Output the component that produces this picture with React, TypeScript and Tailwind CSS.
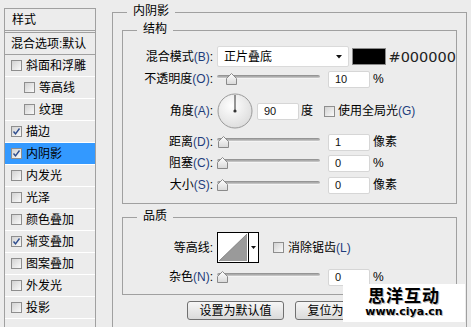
import React from 'react';

const FONT = '"Liberation Sans", "Noto Sans CJK SC", sans-serif';

interface StyleItem {
  label: string;
  checked?: boolean;
  sub?: boolean;
  active?: boolean;
}

const styleItems: StyleItem[] = [
  { label: '斜面和浮雕' },
  { label: '等高线', sub: true },
  { label: '纹理', sub: true },
  { label: '描边', checked: true },
  { label: '内阴影', checked: true, active: true },
  { label: '内发光' },
  { label: '光泽' },
  { label: '颜色叠加' },
  { label: '渐变叠加', checked: true },
  { label: '图案叠加' },
  { label: '外发光' },
  { label: '投影' },
];

const Check: React.FC<{ checked?: boolean }> = ({ checked }) => (
  <span className="relative flex w-[11px] h-[11px] shrink-0 border border-[#8e8e8e] bg-gradient-to-br from-[#d2d2d2] to-[#fafafa]">
    {checked && (
      <svg viewBox="0 0 9 9" className="w-[9px] h-[9px]">
        <path d="M1.5 4.5 L3.5 6.8 L7.5 1.5" fill="none" stroke="#2d4c8e" strokeWidth="1.4" />
      </svg>
    )}
  </span>
);

// label with the hotkey letter in a blue tint, like "混合模式(B):"
const Label: React.FC<{ text: string; hot?: string }> = ({ text, hot }) => (
  <div className="w-[90px] shrink-0 text-right text-[12px] leading-[14px] text-black whitespace-nowrap">
    {text}
    {hot && <span className="text-[#1e3c7c]">({hot})</span>}:
  </div>
);

const Thumb = () => (
  <svg viewBox="0 0 11 12" className="w-[11px] h-[12px]">
    <defs>
      <linearGradient id="tg" x1="0" y1="0" x2="0" y2="1">
        <stop offset="0" stopColor="#ffffff" />
        <stop offset="1" stopColor="#d8d8d8" />
      </linearGradient>
    </defs>
    <path d="M5.5 0.5 L10.5 5.5 L10.5 11.5 L0.5 11.5 L0.5 5.5 Z" fill="url(#tg)" stroke="#8a8a8a" />
  </svg>
);

const Slider: React.FC<{ value: number }> = ({ value }) => (
  <div className="relative w-[103px] h-[13px] shrink-0">
    <div className="absolute left-0 right-0 top-[2px] h-[4px] rounded-full bg-gradient-to-b from-[#8a8a8a] to-[#cfcfcf] border-b border-[#f4f4f4]" />
    <div className="absolute top-0" style={{ left: Math.round((value / 100) * 92) }}>
      <Thumb />
    </div>
  </div>
);

const NumInput: React.FC<{ value: string }> = ({ value }) => (
  <div className="w-[42px] h-[17px] shrink-0 bg-white border border-[#d6d6d6] rounded-[2px] pl-[6px] text-[11px] leading-[15px] text-[#111]">
    {value}
  </div>
);

const SliderRow: React.FC<{ text: string; hot?: string; value: number; unit: string; className?: string }> = ({ text, hot, value, unit, className }) => (
  <div className={`flex items-center h-[18px] ${className ?? ''}`}>
    <Label text={text} hot={hot} />
    <div className="ml-[4px]">
      <Slider value={value} />
    </div>
    <div className="ml-[8px]">
      <NumInput value={String(value)} />
    </div>
    <span className="ml-[3px] text-[12px] leading-[14px]">{unit}</span>
  </div>
);

const GroupTitle: React.FC<{ children: React.ReactNode }> = ({ children }) => (
  <span className="absolute left-[14px] top-[-9px] px-[6px] bg-[#ececec] text-[12px] leading-[14px] text-black">{children}</span>
);

const Dial = () => (
  <svg viewBox="0 0 36 36" className="w-[36px] h-[36px] shrink-0">
    <defs>
      <radialGradient id="dg" cx="0.4" cy="0.35" r="0.7">
        <stop offset="0" stopColor="#ffffff" />
        <stop offset="1" stopColor="#dcdcdc" />
      </radialGradient>
    </defs>
    <circle cx="18" cy="18" r="17" fill="url(#dg)" stroke="#9a9a9a" />
    <line x1="18" y1="18" x2="18" y2="2" stroke="#333" strokeWidth="1" />
    <circle cx="18" cy="18" r="1.6" fill="#333" />
  </svg>
);

export default function App() {
  return (
    <div className="relative w-[471px] h-[327px] overflow-hidden bg-[#ececec] flex pl-[4px] pt-[8px]" style={{ fontFamily: FONT }}>
      {/* styles list */}
      <div className="w-[92px] h-[330px] shrink-0 border border-[#a0a0a0] text-[12px] leading-[14px] text-black">
        <div className="h-[22px] border-b border-[#a0a0a0] pl-[7px] flex items-center">样式</div>
        <div className="h-[1px]" />
        <div className="h-[23px] border-t border-b border-[#a0a0a0] pl-[6px] flex items-center whitespace-nowrap">混合选项:默认</div>
        {styleItems.map(item => (
          <div
            key={item.label}
            className={`h-[22px] border-b border-white flex items-center gap-[4px] ${item.sub ? 'pl-[19px]' : 'pl-[6px]'} ${item.active ? 'bg-[#3399ff]' : ''}`}
          >
            <Check checked={item.checked} />
            <span>{item.label}</span>
          </div>
        ))}
      </div>

      {/* inner shadow panel */}
      <div className="ml-[16px] mt-[4px] relative w-[355px] h-[330px] shrink-0 border border-[#a0a0a0] pt-[17px] px-[9px]">
        <GroupTitle>内阴影</GroupTitle>

        <div className="relative h-[174px] border border-[#a0a0a0] pt-[15px]">
          <GroupTitle>结构</GroupTitle>

          <div className="flex items-center h-[21px]">
            <Label text="混合模式" hot="B" />
            <div className="ml-[4px] w-[133px] h-[21px] bg-white border border-[#dadada] rounded-[2px] flex items-center pl-[6px] pr-[6px] text-[12px] leading-[14px]">
              <span className="flex-1">正片叠底</span>
              <svg viewBox="0 0 6 4" className="w-[6px] h-[4px]">
                <path d="M0 0 H6 L3 3.5 Z" fill="#111" />
              </svg>
            </div>
            <div className="ml-[3px] w-[35px] h-[17px] bg-black border border-[#8a8a8a]" />
            <span className="ml-[2px] text-[14.5px] leading-[16px] text-[#222]" style={{ fontFamily: '"DejaVu Sans", sans-serif' }}>#000000</span>
          </div>

          <SliderRow text="不透明度" hot="O" value={10} unit="%" className="mt-[3px]" />

          <div className="flex items-center h-[34px] mt-[6px]">
            <Label text="角度" hot="A" />
            <div className="ml-[4px]">
              <Dial />
            </div>
            <div className="ml-[4px]">
              <NumInput value="90" />
            </div>
            <span className="ml-[2px] text-[12px] leading-[14px]">度</span>
            <div className="ml-[11px] flex items-center gap-[3px] text-[12px] leading-[14px]">
              <Check />
              <span>使用全局光<span className="text-[#1e3c7c]">(G)</span></span>
            </div>
          </div>

          <SliderRow text="距离" hot="D" value={1} unit="像素" className="mt-[5px]" />
          <SliderRow text="阻塞" hot="C" value={0} unit="%" className="mt-[3px]" />
          <SliderRow text="大小" hot="S" value={0} unit="像素" className="mt-[4px]" />
        </div>

        <div className="relative h-[78px] mt-[13px] border border-[#a0a0a0] pt-[14px]">
          <GroupTitle>品质</GroupTitle>

          <div className="flex items-center h-[31px]">
            <Label text="等高线" />
            <div className="ml-[4px] w-[42px] h-[31px] border border-black bg-white flex">
              <svg viewBox="0 0 30 29" className="w-[30px] h-[29px]">
                <path d="M1 28 L29 1 L29 28 Z" fill="#9a9a9a" />
                <line x1="1" y1="28" x2="29" y2="1" stroke="#777" strokeWidth="0.8" />
              </svg>
              <div className="flex-1 border-l border-black flex items-center justify-center">
                <svg viewBox="0 0 5 3" className="w-[5px] h-[3px]">
                  <path d="M0 0 H5 L2.5 3 Z" fill="#111" />
                </svg>
              </div>
            </div>
            <div className="ml-[14px] flex items-center gap-[4px] text-[12px] leading-[14px]">
              <Check />
              <span>消除锯齿<span className="text-[#1e3c7c]">(L)</span></span>
            </div>
          </div>

          <SliderRow text="杂色" hot="N" value={0} unit="%" className="mt-[5px]" />
        </div>

        <div className="flex justify-center gap-[11px] mt-[6px]">
          <button className="w-[97px] h-[19px] rounded-[3px] border border-[#707070] bg-gradient-to-b from-[#f6f6f6] to-[#dadada] text-[12px] leading-[14px] text-black">
            设置为默认值
          </button>
          <button className="w-[97px] h-[19px] rounded-[3px] border border-[#707070] bg-gradient-to-b from-[#f6f6f6] to-[#dadada] text-[12px] leading-[14px] text-black">
            复位为默认值
          </button>
        </div>
      </div>

      {/* watermark */}
      <div className="absolute left-[343px] top-[284px] w-[122px] h-[38px] bg-white flex flex-col items-center justify-center">
        <span className="text-[17px] leading-[18px] font-bold tracking-[1px] text-black [text-shadow:1px_1px_0_#bbb]">思洋互动</span>
        <span className="text-[11px] leading-[12px] font-bold text-black [text-shadow:1px_1px_0_#bbb]" style={{ fontFamily: '"DejaVu Sans", sans-serif' }}>www.ciya.cn</span>
      </div>
    </div>
  );
}
